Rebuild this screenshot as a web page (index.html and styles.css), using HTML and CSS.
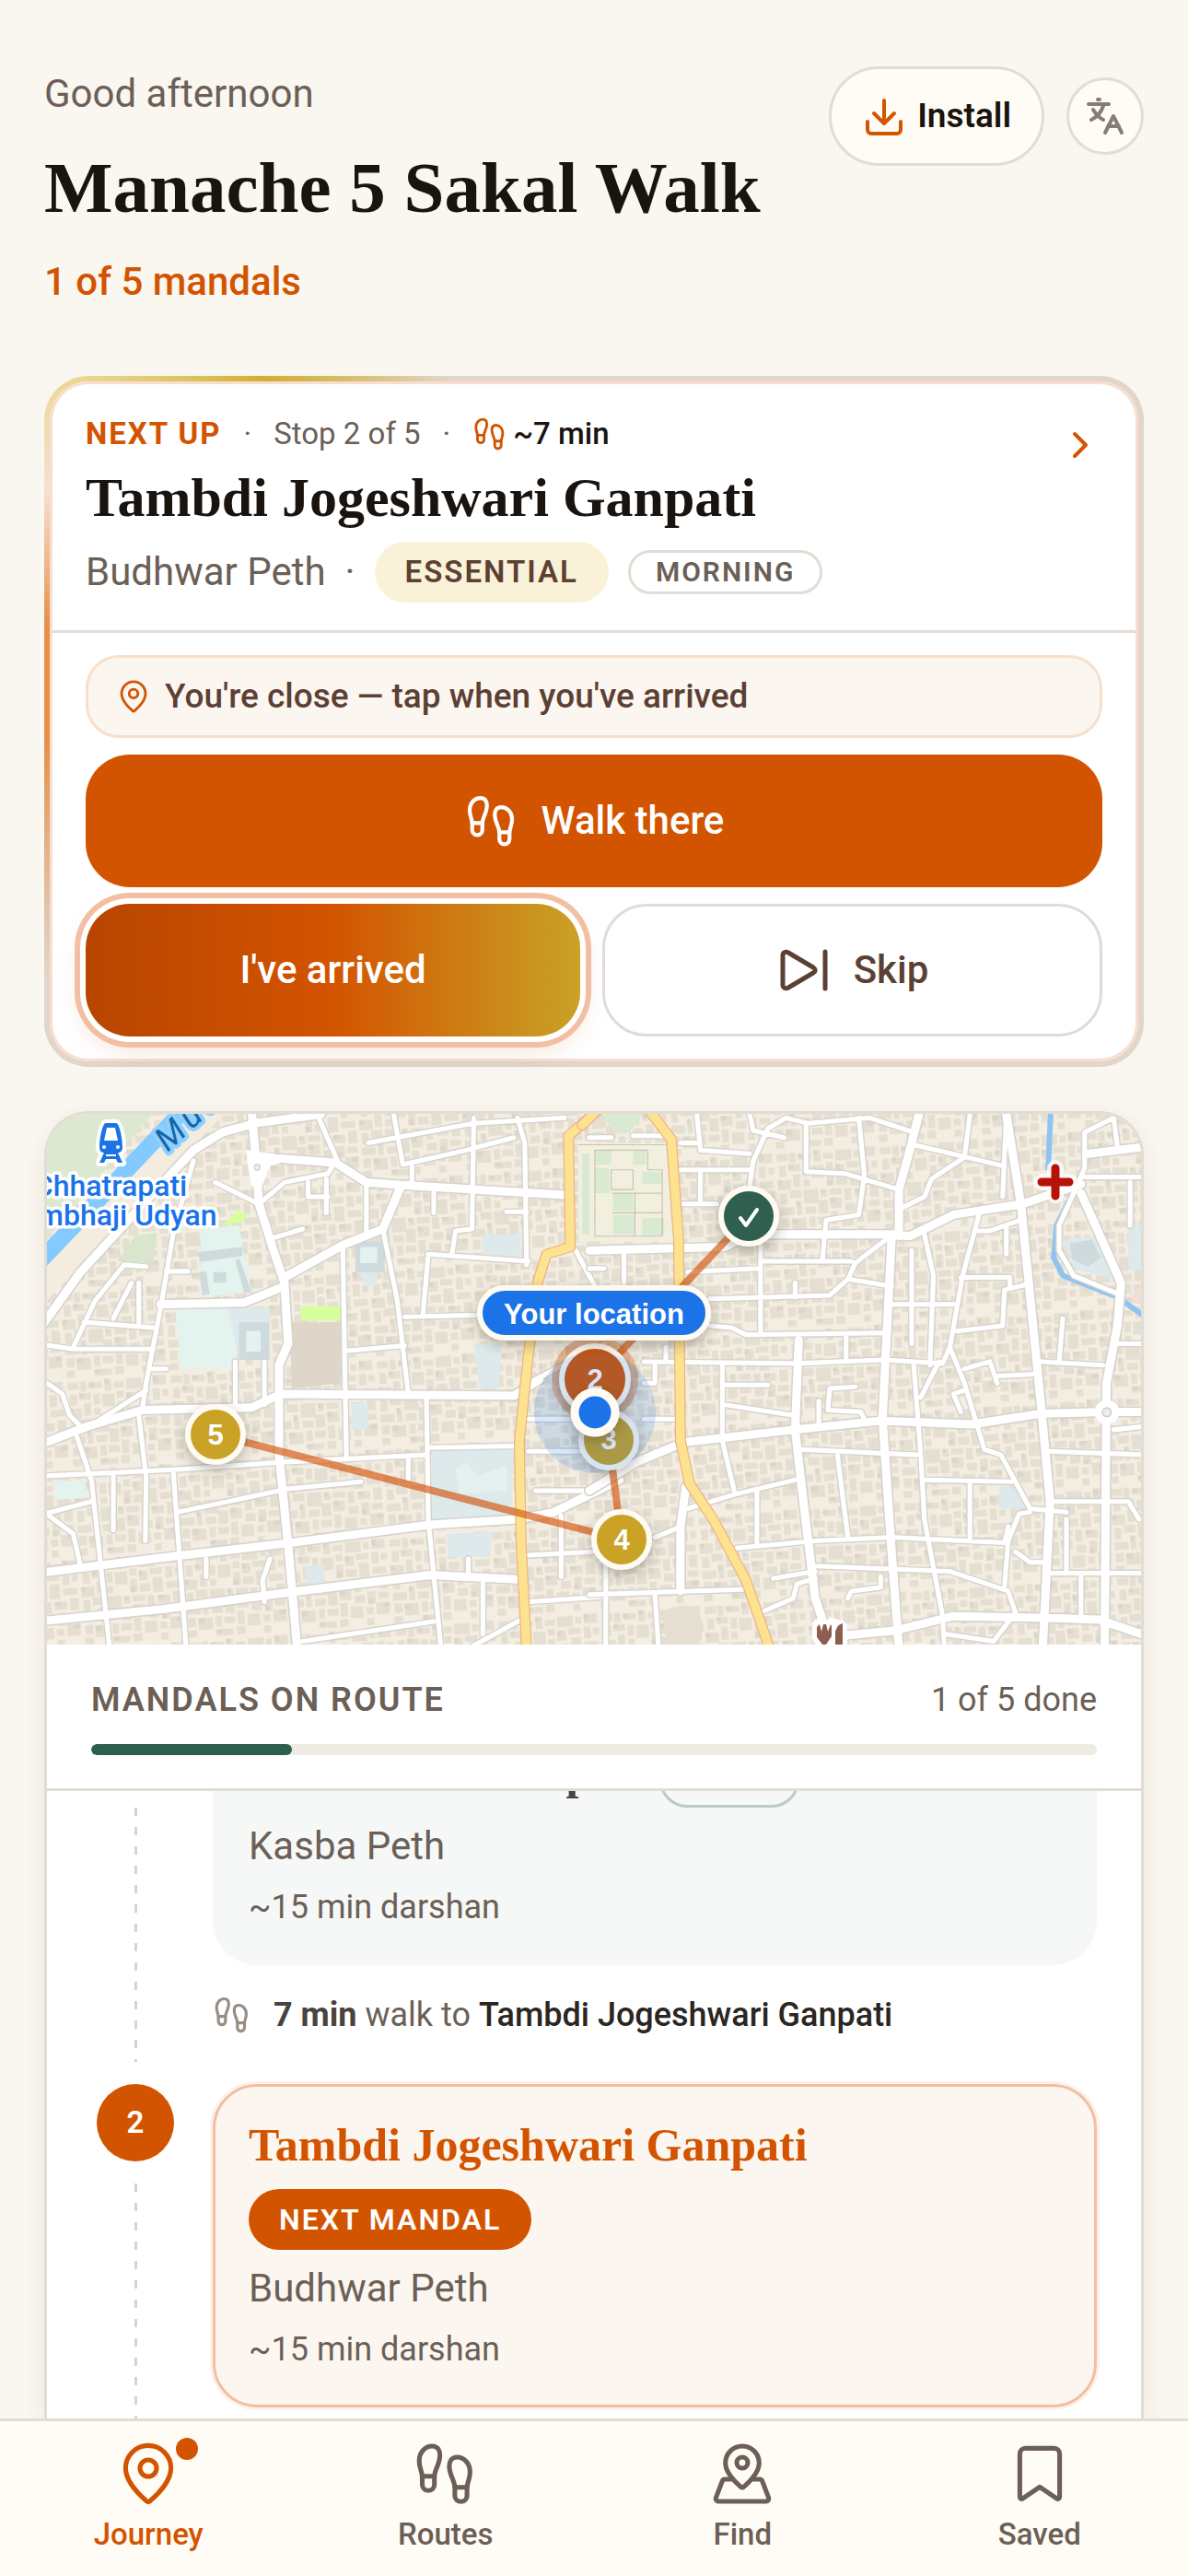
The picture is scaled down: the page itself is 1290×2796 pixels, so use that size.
FILE: index.html
```
<!DOCTYPE html>
<html lang="en">
<head>
<meta charset="utf-8">
<meta name="viewport" content="width=device-width, initial-scale=1">
<title>Manache 5 Sakal Walk</title>
<link rel="stylesheet" href="styles.css">
</head>
<body>
<svg class="sprite" aria-hidden="true">
  <symbol id="i-steps" viewBox="0 0 24 24">
    <g id="shoe">
      <path d="M3.5 12.9C3.2 10.6 2.4 9.6 2.4 7.4 2.4 4.2 4.6 2 7.1 2c1.900 0 2.800 1.400 2.800 3.300C9.900 8.400 8 10.500 7.900 12.900z"/>
      <path d="M3.500 12.900v3a2.200 2.200 0 0 0 4.400 0v-3"/>
    </g>
    <use href="#shoe" transform="translate(23.200 4) scale(-1 1)"/>
  </symbol>
  <symbol id="i-pin" viewBox="0 0 24 24">
    <path d="M11.400 21.900C8 19 3.800 14.300 3.800 10a8.200 8.200 0 0 1 16.400 0c0 4.300-4.200 9-7.600 11.900a1 1 0 0 1-1.200 0z"/>
    <circle cx="12" cy="10" r="3"/>
  </symbol>
</svg>
<div class="app">
<main class="page">
  <header class="top">
    <div class="top-text">
      <p class="greeting">Good afternoon</p>
      <h1>Manache 5 Sakal Walk</h1>
      <p class="count">1 of 5 mandals</p>
    </div>
    <div class="top-actions">
      <button class="install" type="button">
        <svg class="icon-md" viewBox="0 0 48 48" stroke-width="4"><path d="M24 7v25M13 21l11 11 11-11M6 30v9a4 4 0 0 0 4 4h28a4 4 0 0 0 4-4v-9"/></svg>
        Install
      </button>
      <button class="lang" type="button" aria-label="Change language">
        <svg class="icon-md" viewBox="0 0 48 48" stroke-width="4"><path d="M6 11h22M16 6h2M22 13C20 19 15 25 9 28M11 17c3 5 7 9 11 11M24 42l9-18 9 18M27 35h12"/></svg>
      </button>
    </div>
  </header>

  <section class="next">
    <a class="next-head" href="#stop-2">
      <div class="next-info">
        <div class="meta">
          <strong class="eyebrow">NEXT UP</strong><span>·</span><span>Stop 2 of 5</span><span>·</span>
          <span class="walk-time"><svg class="icon-sm"><use href="#i-steps"/></svg>~7 min</span>
        </div>
        <h2>Tambdi Jogeshwari Ganpati</h2>
        <div class="tags">
          <span class="place">Budhwar Peth</span><span class="place">·</span>
          <span class="pill gold">ESSENTIAL</span><span class="pill outline">MORNING</span>
        </div>
      </div>
      <svg class="icon-md chevron" viewBox="0 0 48 48" stroke-width="4"><path d="M18 12l12 12-12 12"/></svg>
    </a>
    <div class="next-actions">
      <p class="hint"><svg class="icon-sm"><use href="#i-pin"/></svg>You're close — tap when you've arrived</p>
      <button class="btn primary" type="button"><svg class="icon-lg"><use href="#i-steps"/></svg>Walk there</button>
      <div class="pair">
        <button class="btn arrived" type="button">I've arrived</button>
        <button class="btn skip" type="button"><svg class="icon-lg" viewBox="0 0 60 60" stroke-width="5"><path d="M7 14v32c0 3 3 5 6 3l27-16c3-2 3-4 0-6L13 11c-3-2-6 0-6 3zM53 10v40"/></svg>Skip</button>
      </div>
    </div>
  </section>

  <section class="route">
    <svg class="map" viewBox="0 0 1188 576" preserveAspectRatio="xMidYMid slice" role="img" aria-label="Route map">
      <defs>
        <pattern id="blocks" width="132" height="114" patternUnits="userSpaceOnUse" patternTransform="rotate(-4) scale(.85)">
          <g fill="#e5dfd2">
            <path d="M2 3h14v9H2zM18 2h8v13h-8zM29 4h17v8H29zM49 1h9v15h-9zM61 5h13v8H61zM77 2h20v14H77zM100 4h8v9h-8zM111 1h17v12h-17z"/>
            <path d="M4 18h9v14H4zM16 17h15v9H16zM34 19h8v14h-8zM45 20h16v16H45zM64 17h9v9h-9zM76 20h11v13H76zM90 18h16v8H90zM110 17h9v15h-9zM122 19h8v9h-8z"/>
            <path d="M1 36h17v13H1zM21 30h9v16h-9zM34 37h8v9h-8zM64 30h9v17h-9zM76 37h14v10H76zM93 30h13v19H93zM110 36h18v9h-18z"/>
            <path d="M3 53h9v14H3zM15 50h15v10H15zM33 50h19v18H33zM55 51h8v10h-8zM66 51h16v8H66zM85 52h9v15h-9zM98 53h16v10H98zM118 49h11v16h-11z"/>
            <path d="M2 71h18v10H2zM23 64h7v18h-7zM34 72h14v9H34zM51 65h12v17H51zM66 63h15v13H66zM85 71h13v10H85zM102 67h10v16h-10zM115 69h14v8h-14z"/>
            <path d="M3 85h10v12H3zM16 86h18v15H16zM38 85h8v13h-8zM49 86h14v9H49zM66 80h9v17h-9zM79 85h16v15H79zM99 87h9v9h-9zM112 82h17v15h-17zM2 101h11v9H2zM38 102h22v8H38zM64 100h11v10H64zM99 101h9v9h-9z"/>
          </g>
          <path fill="#dcd6ca" d="M29 4h7v5h-7zM49 1h5v6h-5zM111 1h6v8h-6zM16 17h6v5h-6zM76 20h5v7h-5zM1 36h6v6H1zM64 40h6v7h-6zM98 53h8v5h-8zM23 64h4v7h-4zM66 63h7v6h-7zM102 76h6v7h-6zM16 86h8v7h-8zM121 82h8v6h-8zM38 102h8v5h-8zM55 51h5v5h-5z"/>
        </pattern>
        <g id="wide-w">
          <path d="M0 660 120 490 310 280 430 150 510 100 600 75 780 50M590 40 600 160 610 300 650 430 680 520 690 690 665 750V1000L690 1250 715 1540M0 975 140 920 290 875 590 868 670 830 1310 835 1380 790M0 1330 400 1280 700 1245 1080 1195 1320 1180 1420 1160 1600 1070M0 1465 350 1430 720 1380 1080 1335 1330 1348M680 505 840 415 950 370 1000 250M620 170 820 185 905 240 1040 250 1450 275M340 580 570 575 680 530"/>
        </g>
        <g id="thin-w">
          <path d="M430 180 375 380 340 590 300 800 290 870M490 240 610 300 680 240 800 215 820 180M770 50 830 190M950 370 990 570 1020 830M840 415 850 1000M1070 840 1075 1180 1110 1540M110 950 150 1070 200 1540M375 1050 410 1540M0 690 100 705H320M100 700 160 570 240 470 300 475M130 630 320 645M210 620 260 520M280 520V630M0 780 70 830 90 890 130 930 300 820M280 890 300 1060 298 1240M210 1060V1210M0 1060 400 1040 680 1020 1070 1000M385 1160 690 1095 890 1075M850 710 1010 695M1010 615 1220 610M1060 610 1075 440 1350 460M1140 440 1150 375 1195 370 1200 60M980 50 1005 190 1180 150 1310 115M910 130 1200 75 1450 60M1030 190V245M1320 60 1340 130 1345 470M905 240V380M650 395 730 370M1075 980 1320 975M730 1520 1090 1465M20 1160 100 1220 120 1310M0 1170 150 1130M1225 1350V1500M1185 1540 1330 1460M1350 1410 1568 1395M1350 1280 1530 1270M1440 1170V1340M745 240V280H800M795 230V325M465 1290V1340M640 1290 620 1350 625 1410M545 740V860M625 740V860M355 488H415M315 760H355M1090 325V270M1290 322H1345M1480 430 1530 525M1350 800 1560 690M1350 900H1500M1350 990H1500M1370 1100H1540M1185 1290V1340M1020 1010V1070"/>
        </g>
        <g id="wide-e">
          <path d="M0 430 370 420 450 385 830 385 880 390 1000 330 1190 300 1350 245M905 50 880 150 850 260V390M1145 50 1185 300 1240 860 1265 1130 1245 1540M830 390 805 900 830 1270 850 1540M0 1100 130 1020 260 965 560 930 800 905 1050 915 1240 885 1420 880H1530M1350 270 1460 520 1450 640 1420 800 1415 1540M1530 140 1370 160M575 680 565 930 590 1150 620 1400 640 1460M640 1510 840 1490 1000 1450 1260 1455 1400 1460 1530 1505M250 1380V1200L265 1090"/>
        </g>
        <g id="thin-e">
          <path d="M0 115H60M120 110H210M270 490 465 480M330 565 660 555 710 510 730 465 840 380M470 385V660M470 460H720M640 455 650 345 740 330 755 220 740 60M440 250 450 180 490 90 540 60 600 75 770 60 890 100M595 75V210L700 215 850 260M440 50 450 95 535 115M295 50 305 150 440 160M250 205H440M305 210V300M255 300H350M860 310 920 280 940 230 1030 170 1045 50M890 135 1140 195M1145 55 1135 280M885 430V690M920 385 945 500 935 750M830 580H1000M1070 330 1025 500 990 700 970 745 810 735 570 745 150 740M330 640 390 645 430 665 810 660M365 750V960L400 1110M270 1150 400 1110 565 1070M370 805H490M370 860 560 890M730 810 660 815 655 875 745 880 755 900M630 850V910M580 985 900 1000M680 990 710 1230M890 740 910 1000 920 1180 970 1450 975 1540M910 840 960 740M405 1260 620 1240 830 1230 1140 1245 1150 1200M460 1100V1250M620 1310 990 1325 1150 1380 1170 1440 1110 1520 980 1500M990 700 1030 800 1085 985 1130 1000 1210 1150 1310 1160M1210 1160 1180 1165 1150 1240 1140 1370M1240 740 1410 750M1290 740 1300 620M1440 60 1360 100V200L1330 270 1290 360 1290 430 1330 500 1450 550M1440 60 1450 140M1350 225H1530M1485 240V360M1260 990 1530 1000M1260 1130H1480L1510 1180M1260 1330H1530M1310 1180V1320M1350 1330V1460M1010 655 1135 640 1140 540 1200 525M1020 505H1155V530M1060 375H1100L1185 345M1145 360V440M1120 780 1225 775M1030 760 1100 740 1120 800M920 1070 1160 1075M1045 1080V1240M0 1390 430 1375M180 1390 190 1540M45 1220V1540M180 1230 240 1205M470 1440 560 1400 570 1360 620 1345M710 1400 720 1380 800 1370V1340M95 430V520M0 480H40M1450 690 1530 690M1440 930 1530 920M705 670V730M565 520V560M715 510 830 530M1030 820 1000 830 1020 880M250 130H300M210 700V735M180 745V800H150M150 900H245M505 1345 620 1325M1170 1270 1210 1300H1245"/>
        </g>
        <g id="main-w"><path d="M1540 40 1460 110 1465 420 1400 440 1375 520 1350 720 1325 960 1330 1250 1345 1540"/></g>
        <g id="main-e"><path d="M-20 80 20 40M165 40 225 120 245 400 250 960 275 1080 340 1180 430 1350 495 1540"/></g>
        <filter id="lift" x="-40%" y="-40%" width="180%" height="190%"><feDropShadow dx="0" dy="5" stdDeviation="7" flood-color="#3c3226" flood-opacity=".35"/></filter>
      </defs>
      <rect width="1188" height="576" fill="#f3eee1"/>
      <rect width="1188" height="576" fill="url(#blocks)"/>
      <g transform="translate(-11 -19) scale(.3954 .3891)">
        <path fill="#dde8d0" d="M0 0H360L0 430z"/>
        <path fill="#f3ecdf" d="M400 0H560L0 600V470z"/>
        <path fill="#d9e6cd" d="M270 390 330 380 320 465 220 460z"/>
        <path fill="#e3f3ee" d="M450 370 555 360 590 545 450 560zM380 590H550V760H395zM50 1070 135 1075V1120L50 1125z"/>
        <path fill="#dde9ea" d="M525 590H640V735H555zM875 405H955L930 530H905L875 480zM1085 990 1310 980 1300 1170 1085 1180zM1125 1220 1250 1215 1245 1285H1130zM1225 385 1330 385 1325 450 1225 440zM1200 690H1275L1270 815H1215zM735 1310 790 1308V1360L740 1362zM865 855H910V930H865z"/>
        <path fill="#cfdadd" d="M440 435 565 420V445L450 462zM555 450 590 545 570 548 545 460zM445 490 465 488 475 552 455 555zM485 490H520V520H485zM555 630H638V735H555zM875 405H955V490H875z"/>
        <path fill="#e3f1f1" d="M575 655H615V712H575zM888 420H935V465H888zM1150 1040 1180 1020 1210 1060 1290 1030V1100L1160 1110z"/>
        <path fill="#d7ff9c" d="M725 585H835V625H725zM510 360 550 320 575 325 570 350z"/>
        <path fill="#ddd6c9" d="M695 630H835V800L700 815z"/>
        <path fill="none" stroke="#82caff" stroke-width="46" d="M-20 490 420 20"/>
      </g>
      <g transform="translate(589 -19) scale(.3954 .3891)">
        <path fill="#f2efdf" d="M-30 130H220L230 405H-30z"/>
        <path fill="#d9e9d2" d="M15 150H60V190H15zM120 150H155V190H120zM145 210H200V245H145zM15 200H55V270H15zM65 270H120V320H65zM65 330H125V385H65zM145 340H205V388H145zM-20 160H0V385H-20zM30 45H150L110 100H70z"/>
        <path fill="none" stroke="#b9b7a6" stroke-width="3" stroke-dasharray="3 4" d="M15 150H160V205H200V390H15zM60 205H120V260H60zM-30 135H220M65 270H200M65 325H200M125 270V390"/>
        <path fill="#e5dfd2" d="M200 1450 225 1425 265 1420 300 1440 315 1480 300 1530H215z"/>
        <path fill="#dde9ea" d="M1300 400 1395 390 1445 510 1330 480zM1480 360H1530V485H1480zM1125 1085 1195 1100V1150H1125z"/>
        <path fill="#cfdadd" d="M1320 410 1380 400 1405 450 1370 475 1325 455z"/>
        <path fill="#f0dfd8" d="M1480 560 1530 520V590z"/>
        <path fill="none" stroke="#8fc3f0" stroke-width="15" d="M1267 40 1260 200M1330 265 1283 360 1275 450 1300 500 1450 560 1530 618"/>
      </g>
      <g class="lines" transform="translate(-11 -19) scale(.3954 .3891)">
        <use href="#thin-w" class="case-thin"/><use href="#wide-w" class="case-wide"/>
        <use href="#thin-w" class="road-thin"/><use href="#wide-w" class="road-wide"/>
        <path fill="#fff" d="M575 150 650 160 700 175 640 195 615 260 590 250 580 200z"/>
        <circle cx="605" cy="198" r="8" fill="#eee" stroke="#ccc" stroke-width="3"/>
        <use href="#main-w" class="case-main"/><use href="#main-w" class="road-main"/>
      </g>
      <g class="lines" transform="translate(589 -19) scale(.3954 .3891)">
        <use href="#thin-e" class="case-thin"/><use href="#wide-e" class="case-wide"/>
        <use href="#thin-e" class="road-thin"/><use href="#wide-e" class="road-wide"/>
        <circle cx="1421" cy="881" r="34" fill="#fff"/><circle cx="1421" cy="881" r="12" fill="#eee" stroke="#ccc" stroke-width="4"/>
        <use href="#main-e" class="case-main"/><use href="#main-e" class="road-main"/>
      </g>
      <text class="river-name" transform="translate(131 42) rotate(-43)">Mutha</text>
      <path fill="#1a73e8" stroke="#fff" stroke-width="8" paint-order="stroke" stroke-linejoin="round" d="M64 10h11c4 0 7 18 7 26 0 4-2 6-5 6l5 11h-5l-2-4H64l-2 4h-5l5-11c-3 0-5-2-5-6 0-8 3-26 7-26z"/>
      <path fill="#fff" d="M65 15h9l3 14H62zM64 44h11v2H64z"/><circle cx="62" cy="36" r="2" fill="#fff"/><circle cx="77" cy="36" r="2" fill="#fff"/>
      <text class="station" x="69" y="89">Chhatrapati</text>
      <text class="station" x="69" y="121">Sambhaji Udyan</text>
      <path d="M1095 59v29M1080 74h30" stroke="#fff" stroke-width="18" stroke-linecap="round" opacity=".8"/>
      <path d="M1095 59v30M1080 74h30" stroke="#b71207" stroke-width="9" stroke-linecap="round"/>
      <path d="M840 556v12l7 8 6-8v-12M860 576v-18" stroke="#fff" stroke-width="18" fill="none"/>
      <path fill="#8d5f50" d="M836 557l3-3 2 8 2-8h3l2 8 3-8 1 2v11l-6 9h-4l-6-8zM856 576v-14q2-8 8-9v23z"/>

      <polyline points="762,111 595,288 610,354 624,462 183,348" fill="none" stroke="#d4550c" stroke-opacity=".65" stroke-width="8"/>
      <circle cx="595" cy="288" r="47" fill="#d4550c" fill-opacity=".35"/>
      <g class="marks" filter="url(#lift)">
        <circle cx="610" cy="354" r="30" fill="#c9a227"/>
        <circle cx="595" cy="288" r="36" fill="#d35400"/>
        <circle cx="624" cy="462" r="30" fill="#c9a227"/>
        <circle cx="183" cy="348" r="30" fill="#c9a227"/>
        <circle cx="762" cy="111" r="30" fill="#2d5f4f"/>
      </g>
      <path d="M753 113l6 8 12-17" fill="none" stroke="#fff" stroke-width="4" stroke-linecap="round" stroke-linejoin="round"/>
      <g class="mark-no">
        <text x="595" y="299">2</text><text x="610" y="364">3</text><text x="624" y="473">4</text><text x="183" y="359">5</text>
      </g>
      <circle cx="595" cy="324" r="66" fill="#1a73e8" fill-opacity=".17"/>
      <circle cx="595" cy="324" r="22" fill="#1a73e8" stroke="#fffaf2" stroke-width="9" filter="url(#lift)"/>
      <rect x="470" y="189" width="248" height="54" rx="27" fill="#1a73e8" stroke="#fffaf2" stroke-width="6" filter="url(#lift)"/>
      <text class="you" x="594" y="228">Your location</text>
    </svg>

    <div class="route-head">
      <div class="route-line"><h3>MANDALS ON ROUTE</h3><span>1 of 5 done</span></div>
      <div class="bar"><div class="bar-fill" style="width:20%"></div></div>
    </div>

    <div class="list">
      <ol class="stops">
        <li class="stop">
          <div class="rail"><span class="num done">1</span><span class="dash"></span></div>
          <div class="stop-body">
            <article class="mandal visited">
              <div class="mandal-title"><h4>Shri Kasba Ganpati</h4><span class="pill outline green">DONE</span></div>
              <p class="place">Kasba Peth</p>
              <p class="time">~15 min darshan</p>
            </article>
            <p class="leg"><svg class="icon-leg"><use href="#i-steps"/></svg><span><strong>7 min</strong> walk to <b>Tambdi Jogeshwari Ganpati</b></span></p>
          </div>
        </li>
        <li class="stop" id="stop-2">
          <div class="rail"><span class="num">2</span><span class="dash"></span></div>
          <div class="stop-body">
            <article class="mandal current">
              <h4>Tambdi Jogeshwari Ganpati</h4>
              <span class="pill solid">NEXT MANDAL</span>
              <p class="place">Budhwar Peth</p>
              <p class="time">~15 min darshan</p>
            </article>
          </div>
        </li>
      </ol>
    </div>
  </section>
</main>

<nav class="tabs">
  <a class="tab active" href="#journey"><span class="tab-icon"><svg class="icon-xl"><use href="#i-pin"/></svg><i class="dot"></i></span>Journey</a>
  <a class="tab" href="#routes"><svg class="icon-xl"><use href="#i-steps"/></svg>Routes</a>
  <a class="tab" href="#find"><svg class="icon-xl" viewBox="0 0 24 24"><path d="M8 14H5.700a1 1 0 0 0-.950.700L2.450 20.700A1 1 0 0 0 3.400 22h17.200a1 1 0 0 0 .950-1.300L19.250 14.700a1 1 0 0 0-.950-.700H16"/><path d="M11.400 16.700C9 14.600 5.900 11.300 5.900 8.100a6.100 6.100 0 0 1 12.200 0c0 3.200-3.100 6.500-5.500 8.600a1 1 0 0 1-1.200 0z"/><circle cx="12" cy="8" r="2"/></svg>Find</a>
  <a class="tab" href="#saved"><svg class="icon-xl" viewBox="0 0 24 24"><path d="M4.800 20.200V4.800a2 2 0 0 1 2-2h10.400a2 2 0 0 1 2 2v15.400c0 .9-.7 1.200-1.300.6L12 16.800l-5.900 4c-.6.600-1.300.3-1.300-.6z"/></svg>Saved</a>
</nav>
</div>
</body>
</html>
```
FILE: styles.css
```
:root {
  --orange: #d35400;
  --ink: #1a1410;
  --brown: #5c4033;
  --muted: #6b5f56;
  --line: #e2ddd4;
  --cream: #fffcf6;
  --serif: "Liberation Serif", serif;
}
* { box-sizing: border-box; }
body {
  margin: 0;
  background: #faf6f0;
  color: var(--ink);
  font: 400 36px/54px Roboto, sans-serif;
}
h1, h2, h3, h4, p, ol { margin: 0; padding: 0; font-weight: 400; }
a { color: inherit; text-decoration: none; }
button { font: inherit; color: inherit; cursor: pointer; }
svg { flex: none; stroke-linecap: round; stroke-linejoin: round; }
.sprite { position: absolute; width: 0; height: 0; }
.icon-sm, .icon-leg, .icon-md, .icon-lg, .icon-xl { fill: none; stroke: currentColor; }
.icon-sm, .icon-leg { stroke-width: 1.8; }
.icon-lg, .icon-xl { stroke-width: 1.7; }
.icon-lg[viewBox="0 0 60 60"] { stroke-width: 5; }
.icon-sm { width: 38px; height: 38px; }
.icon-leg { width: 42px; height: 42px; color: #988e86; }
.icon-md { width: 48px; height: 48px; }
.icon-lg { width: 60px; height: 60px; }
.icon-xl { width: 72px; height: 72px; }

.app { height: 100vh; display: flex; flex-direction: column; }
.page { flex: 1; min-height: 0; display: flex; flex-direction: column; padding: 72px 48px 0; overflow: hidden; }

.top { display: flex; justify-content: space-between; margin-bottom: 72px; }
.top-text { display: flex; flex-direction: column; gap: 24px; }
.greeting { font-size: 42px; line-height: 60px; color: var(--muted); }
h1 { font: 700 79px/96px var(--serif); }
.count { font-size: 42px; line-height: 60px; font-weight: 500; color: var(--orange); }
.top-actions { display: flex; align-items: flex-start; gap: 24px; }
.install {
  display: flex; align-items: center; gap: 12px; height: 108px; padding: 0 33px;
  border: 3px solid var(--line); border-radius: 54px; background: var(--cream);
  font-weight: 600; font-size: 37px;
}
.install svg { color: var(--orange); }
.lang {
  display: grid; place-items: center; width: 84px; height: 84px; margin-top: 12px; padding: 0;
  border: 3px solid var(--line); border-radius: 50%; background: var(--cream); color: #857c74;
}

.next {
  border: 6px solid transparent; border-radius: 48px; margin-bottom: 48px;
  background:
    linear-gradient(#fff, #fff) padding-box,
    conic-gradient(#e0d6cb 0 245deg, #e5904a 268deg 280deg, #f8e0d0 293deg, #e8d890 304deg, #cfb033 316deg, #e0d6cb 337deg) border-box;
  box-shadow: inset 0 0 0 3px #f9ded0;
}
.next-head { display: flex; justify-content: space-between; padding: 33px 36px 30px; margin: 0 3px; border-bottom: 3px solid var(--line); }
.meta { display: flex; align-items: center; gap: 24px; font-size: 33px; line-height: 48px; color: var(--muted); }
.eyebrow { font-weight: 700; letter-spacing: 2px; color: var(--orange); }
.walk-time { display: flex; align-items: center; gap: 6px; color: var(--ink); font-weight: 500; }
.walk-time svg, .chevron, .hint svg { color: var(--orange); }
h2 { font: 700 60px/72px var(--serif); margin: 9px 0 12px; }
.tags { display: flex; align-items: center; gap: 21px; }
.place { font-size: 42px; line-height: 60px; color: var(--muted); }
.chevron { margin-top: 12px; }
.pill {
  display: inline-flex; align-items: center; height: 66px; padding: 0 33px; border-radius: 33px;
  font-size: 33px; font-weight: 600; letter-spacing: 2px;
}
.pill.gold { background: #faf2d8; color: var(--brown); }
.pill.outline { height: 48px; padding: 0 27px; border: 3px solid var(--line); font-size: 30px; color: var(--muted); }
.pill.outline.green { height: 60px; padding: 0 30px; border-color: #bccbc6; }
.pill.solid { background: var(--orange); color: #fff; font-size: 32px; }

.next-actions { display: flex; flex-direction: column; gap: 18px; margin: 0 3px; padding: 24px 36px 27px; }
.hint {
  display: flex; align-items: center; gap: 15px; height: 90px; padding: 0 30px;
  border: 3px solid #f7dfcd; border-radius: 36px; background: #fbf6f0; color: var(--brown); font-weight: 500; font-size: 37px;
}
.btn {
  display: flex; align-items: center; justify-content: center; gap: 24px; height: 144px; padding: 0;
  border: 0; border-radius: 48px; font-size: 42px; font-weight: 500; color: #fff;
}
.primary { background: var(--orange); }
.pair { display: grid; grid-template-columns: 179fr 181fr; gap: 24px; }
.arrived {
  background: linear-gradient(90deg, #b84500, #d35400 50%, #c9a227);
  box-shadow: 0 0 0 6px #fff, 0 0 0 12px #f2bfa3, 0 12px 30px rgba(211, 84, 0, .2);
}
.skip { background: #fff; border: 3px solid #dcdcdc; color: var(--brown); }

.route {
  flex: 1; min-height: 0; display: flex; flex-direction: column; overflow: hidden;
  border: 3px solid var(--line); border-bottom: 0; border-radius: 48px 48px 0 0; background: #fff;
  box-shadow: 0 6px 24px rgba(90, 60, 30, .08);
}
.map { display: block; width: 100%; height: 576px; }
.lines use { fill: none; stroke-linejoin: round; }
.case-thin { stroke: #d6d3ce; stroke-width: 20; }
.case-wide { stroke: #d6d3ce; stroke-width: 31; }
.road-thin { stroke: #fff; stroke-width: 13; }
.road-wide { stroke: #fff; stroke-width: 23; }
.case-main { stroke: #efb083; stroke-width: 30; }
.road-main { stroke: #fde290; stroke-width: 24; }
.river-name { font: italic 400 36px Roboto, sans-serif; letter-spacing: 5px; fill: #1565a8; stroke: #8fd0ff; stroke-width: 8px; paint-order: stroke; }
.station { font: 500 32px Roboto, sans-serif; text-anchor: middle; fill: #1a73e8; stroke: #fff; stroke-width: 7px; paint-order: stroke; }
.marks circle { stroke: #fffaf2; stroke-width: 6px; }
.mark-no { font: 700 31px "Liberation Sans", sans-serif; text-anchor: middle; fill: #fff; }
.you { font: 700 31px "Liberation Sans", sans-serif; text-anchor: middle; fill: #fff; }

.route-head { padding: 33px 48px 36px; border-bottom: 3px solid var(--line); }
.route-line { display: flex; justify-content: space-between; margin-bottom: 21px; color: var(--muted); }
h3 { font-size: 36px; font-weight: 600; letter-spacing: 2px; }
.bar { height: 12px; border-radius: 6px; background: #eeebe3; overflow: hidden; }
.bar-fill { height: 100%; border-radius: 6px; background: #2d5f4f; }

.list { flex: 1; min-height: 0; overflow: hidden; }
.stops { list-style: none; margin-top: -90px; padding: 0 48px 0 54px; }
.stop { display: grid; grid-template-columns: 84px 1fr; gap: 42px; }
.rail { display: flex; flex-direction: column; align-items: center; }
.num { display: grid; place-items: center; width: 84px; height: 84px; border-radius: 50%; background: var(--orange); color: #fff; font-size: 33px; font-weight: 600; }
.num.done { background: #2d5f4f; }
.dash { flex: 1; width: 3px; margin: 24px 0; background: repeating-linear-gradient(#d6d4d2 0 9px, transparent 9px 21px); }
.stop-body { padding-bottom: 48px; }
.mandal { display: flex; flex-direction: column; align-items: flex-start; padding: 33px 36px; border: 3px solid transparent; border-radius: 48px; }
.visited { background: #f5f8f7; }
.current { background: #fcf6f0; border-color: #f2bfa3; box-shadow: 0 0 0 3px #fdf1e9; }
h4 { font: 700 50px/60px var(--serif); }
.mandal-title { display: flex; align-items: flex-end; gap: 18px; height: 72px; margin-bottom: 12px; }
.mandal-title h4 { margin-bottom: 8px; color: #4a4541; }
.current h4 { margin-bottom: 18px; color: var(--orange); }
.current .pill { margin-bottom: 12px; }
.time { margin-top: 9px; color: var(--muted); }
.leg { display: flex; align-items: center; gap: 24px; margin-top: 27px; color: var(--muted); }
.leg strong { font-weight: 700; color: #4a433d; }
.leg b { font-weight: 500; color: #2a2622; }

.tabs { display: grid; grid-template-columns: repeat(4, 1fr); height: 171px; padding-top: 21px; border-top: 3px solid var(--line); background: var(--cream); }
.tab { display: flex; flex-direction: column; align-items: center; gap: 6px; font-size: 33px; line-height: 48px; font-weight: 500; color: var(--muted); }
.tab.active { color: var(--orange); }
.tab-icon { position: relative; height: 72px; }
.dot { position: absolute; top: -3px; right: -18px; width: 24px; height: 24px; border-radius: 50%; background: var(--orange); }
```
